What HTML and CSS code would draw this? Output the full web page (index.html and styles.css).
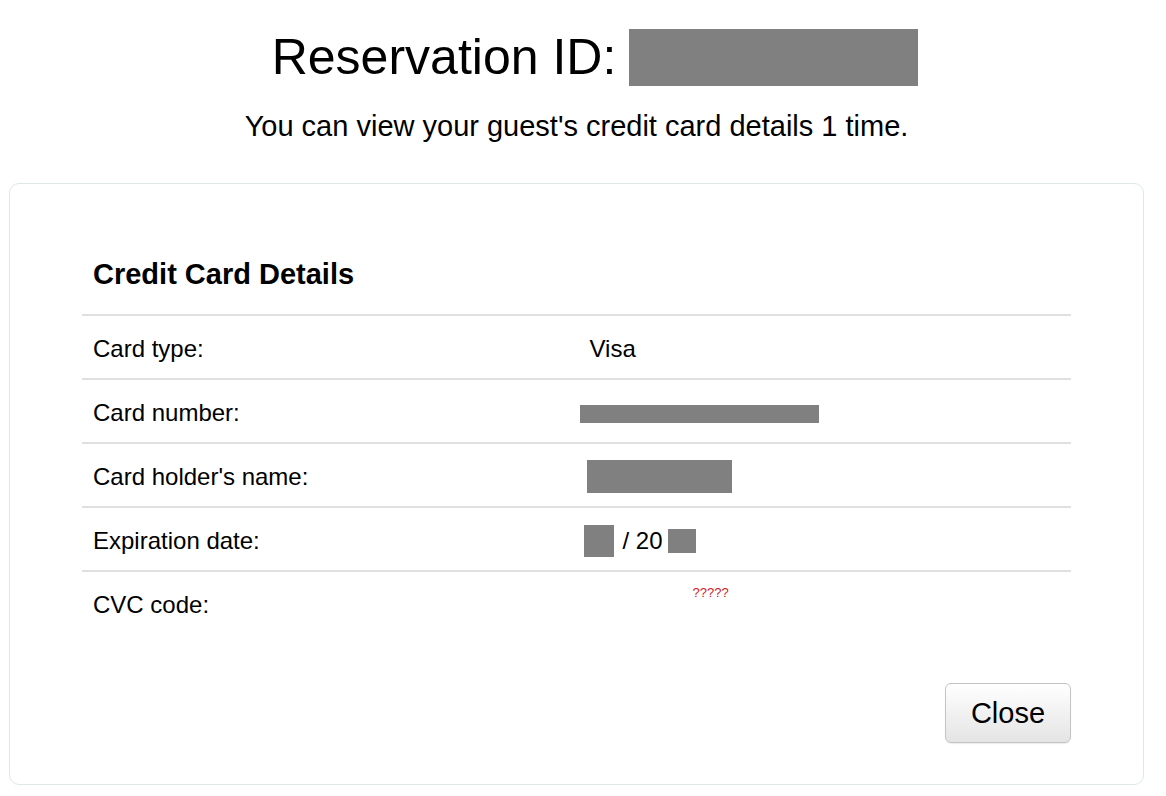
FILE: index.html
```html
<!DOCTYPE html>
<html lang="en">
<head>
<meta charset="utf-8">
<title>Credit Card Details</title>
<link rel="stylesheet" href="styles.css">
</head>
<body>
<div class="page">
  <h1 class="title"><span class="title-text">Reservation ID:</span><span class="redact redact-id"></span></h1>
  <p class="subtitle">You can view your guest's credit card details 1 time.</p>
  <section class="card">
    <table class="details">
      <thead>
        <tr><th colspan="2" class="heading">Credit Card Details</th></tr>
      </thead>
      <tbody>
        <tr><td class="label">Card type:</td><td class="value">Visa</td></tr>
        <tr><td class="label">Card number:</td><td class="value"><span class="redact redact-number"></span></td></tr>
        <tr><td class="label">Card holder's name:</td><td class="value"><span class="redact redact-name"></span></td></tr>
        <tr><td class="label">Expiration date:</td><td class="value"><span class="redact redact-month"></span><span class="exp-sep">/ 20</span><span class="redact redact-year"></span></td></tr>
        <tr class="last"><td class="label">CVC code:</td><td class="value"><span class="cvc">?????</span></td></tr>
      </tbody>
    </table>
    <div class="actions">
      <button class="btn" type="button">Close</button>
    </div>
  </section>
</div>
</body>
</html>
```

FILE: styles.css
```css
html, body {
  margin: 0;
  padding: 0;
  background: #ffffff;
}

body {
  font-family: "Liberation Sans", Arial, sans-serif;
  color: #000000;
}

.page {
  padding: 0 22px 0 9px;
}

.title {
  display: flex;
  justify-content: center;
  align-items: center;
  margin: 29px 0 0;
  padding-left: 37px;
  height: 57px;
  font-size: 50px;
  font-weight: normal;
  line-height: 57px;
}

.title-text {
  margin-right: 13px;
}

.redact {
  display: inline-block;
  background: #808080;
}

.redact-id {
  width: 289px;
  height: 57px;
}

.subtitle {
  margin: 24px 0 0;
  text-align: center;
  font-size: 29px;
  line-height: 32px;
}

.card {
  margin-top: 41px;
  border: 1px solid #dfe7e9;
  border-radius: 10px;
  padding: 48px 72px 41px;
}

.details {
  width: 100%;
  border-collapse: collapse;
  table-layout: fixed;
}

.heading {
  text-align: left;
  font-size: 29px;
  font-weight: bold;
  line-height: 32px;
  padding: 26px 11px 24px;
}

.details td {
  border-top: 2px solid #e0e0e0;
  height: 64px;
  padding: 3px 11px 0;
  font-size: 24px;
  vertical-align: middle;
  box-sizing: border-box;
}

.details td.value {
  padding-left: 13px;
}

.redact-number {
  width: 239px;
  height: 18px;
  margin-left: -10px;
  vertical-align: middle;
}

.redact-name {
  width: 145px;
  height: 33px;
  margin-left: -3px;
  vertical-align: middle;
}

.redact-month {
  width: 30px;
  height: 32px;
  margin-left: -6px;
  vertical-align: middle;
}

.exp-sep {
  margin: 0 5px 0 9px;
  vertical-align: middle;
}

.redact-year {
  width: 28px;
  height: 24px;
  vertical-align: middle;
}

.last .value {
  vertical-align: top;
}

.cvc {
  display: inline-block;
  margin: 6px 0 0 103px;
  font-size: 13px;
  line-height: 16px;
  color: #d0202a;
}

.actions {
  display: flex;
  justify-content: flex-end;
  margin-top: 48px;
}

.btn {
  width: 126px;
  height: 60px;
  font-family: "Liberation Sans", Arial, sans-serif;
  font-size: 29px;
  color: #000000;
  background: linear-gradient(#ffffff, #e4e4e4);
  border: 1px solid #c4c4c4;
  border-radius: 6px;
  box-shadow: 0 1px 1px rgba(0, 0, 0, 0.08);
  padding: 0;
  cursor: pointer;
}
```
